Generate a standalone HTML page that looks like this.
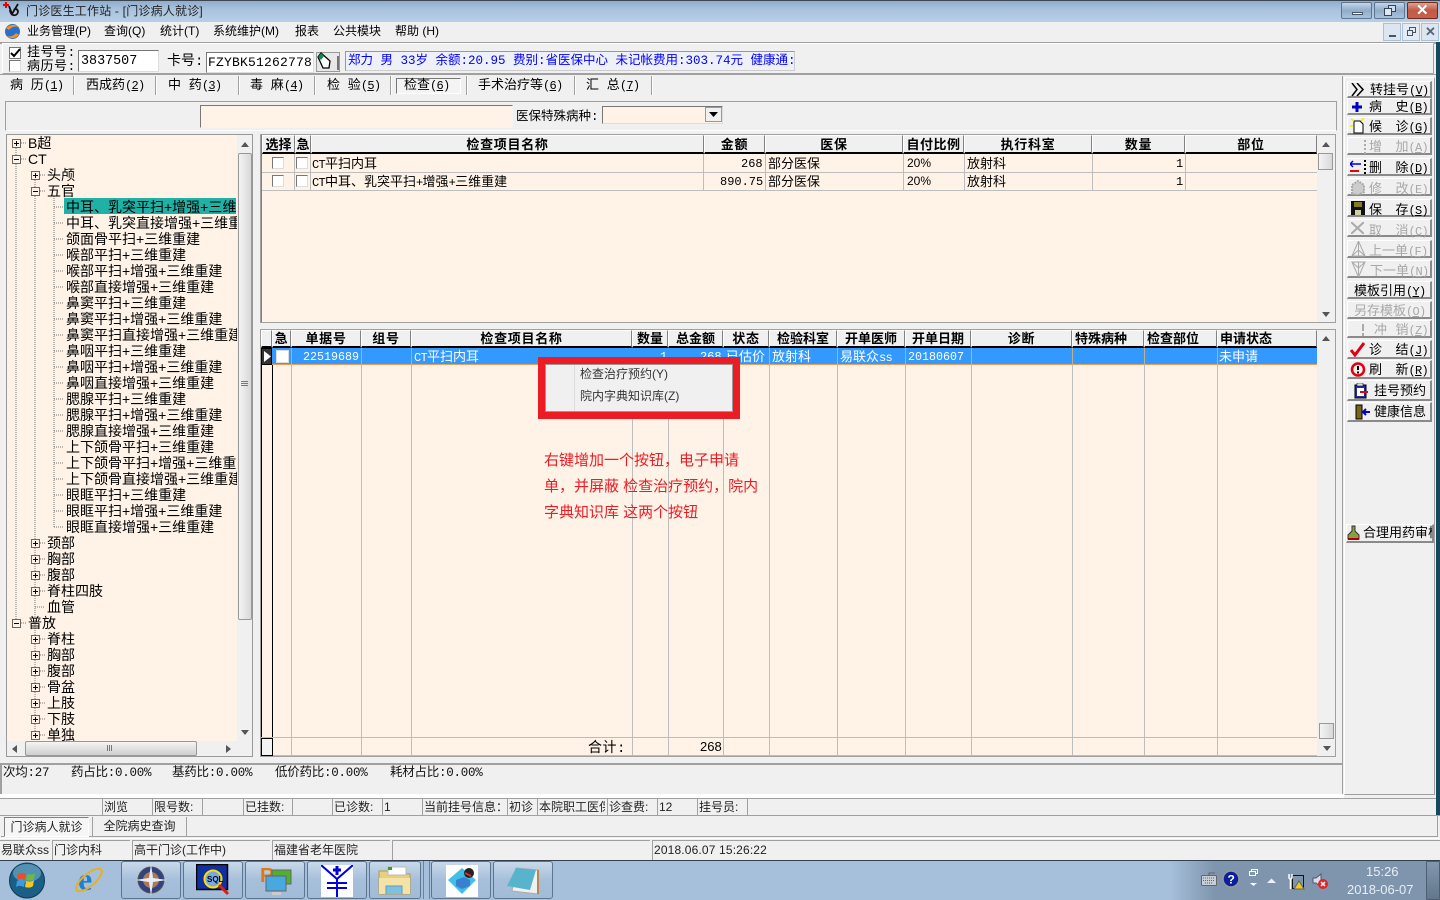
<!DOCTYPE html>
<html lang="zh-CN"><head><meta charset="utf-8"><title>门诊医生工作站</title>
<style>
html,body{margin:0;padding:0;width:1440px;height:900px;overflow:hidden;background:#f0f0f0}
body{position:relative;font-family:"Liberation Sans","Noto Sans CJK SC",sans-serif;font-size:12px;color:#000}
div,span,svg{position:absolute;box-sizing:border-box}
i{font-style:normal;font-size:12px;letter-spacing:-.7px}
.t{white-space:nowrap;line-height:16px;height:16px}
.s{font-family:"Liberation Mono","WenQuanYi Zen Hei","Noto Sans CJK SC",monospace;font-size:13px}
.h{font-weight:bold;font-size:13px;letter-spacing:.7px;text-align:center;font-family:"Liberation Sans","WenQuanYi Zen Hei","Noto Sans CJK SC",sans-serif}
.tr{font-size:14px;font-family:"Liberation Sans","WenQuanYi Zen Hei","Noto Sans CJK SC",sans-serif}
.hc{background:#f0f0f0;border-right:1px solid #808080;border-bottom:2px solid #000;border-left:1px solid #fff;border-top:1px solid #fff}
.g1{padding-top:1px}
.la{text-align:left;padding-left:2px}
.vl{width:1px;background:#bdbdbd}
.hl{height:1px;background:#bdbdbd}
.btn{left:1347px;width:85px;background:#f0f0f0;border-top:1px solid #fff;border-left:1px solid #fff;border-right:2px solid #8a8a8a;border-bottom:2px solid #8a8a8a;font-size:13px;font-family:"Liberation Mono","WenQuanYi Zen Hei","Noto Sans CJK SC",monospace;white-space:nowrap}
.btn span{line-height:15px;top:2px;white-space:nowrap}
.btn span.r{right:2px}
.d{color:#a8a8a8}
.cell{top:798px;height:17px;background:#f0f0f0;border-top:1px solid #a0a0a0;border-left:1px solid #a0a0a0;line-height:16px;padding-left:1px;font-size:12px;white-space:nowrap;overflow:hidden;color:#222}
.c2{top:840px;height:20px;border-top:1px solid #a0a0a0;border-left:1px solid #a0a0a0;line-height:19px;padding-left:1px;font-size:12px;white-space:nowrap;overflow:hidden;color:#222}
.tab{top:78px;height:17px;font-size:13px;line-height:16px;white-space:nowrap}
.tb{top:861px;height:38px;border:1px solid #5d7590;border-radius:3px;background:linear-gradient(#c9d9ea,#a6bfda 50%,#a2bbd6)}
.cb{width:12px;height:12px;background:#fff;border:1px solid #777;border-right-color:#ddd;border-bottom-color:#ddd}
.sep{top:76px;width:2px;height:19px;border-left:1px solid #a0a0a0;border-right:1px solid #fff}
.inf{font-size:12.5px;color:#111;letter-spacing:-.25px;top:765px}
u{text-decoration:underline}
</style></head><body>

<!-- title bar -->
<div style="left:0;top:0;width:1440px;height:22px;background:linear-gradient(#8fadcd,#a9c3de 40%,#b7cee6);border-top:1px solid #3c4650"></div>
<svg style="left:3px;top:1px" width="18" height="18" viewBox="0 0 18 18"><path d="M3 1v6M0 4h6" stroke="#e00" stroke-width="2"/><path d="M6 5l3 8 6-10M7 9c0 6 7 7 8 2 0-3-3-4-4-2" fill="none" stroke="#111" stroke-width="1.8"/></svg>
<div class="t" style="left:26px;top:3px;color:#222;font-size:12px;letter-spacing:.2px">门诊医生工作站 - [门诊病人就诊]</div>
<div style="left:1341px;top:2px;width:31px;height:17px;border:1px solid #5d7590;border-radius:2px;background:linear-gradient(#c4d6e8,#8facc8 50%,#a8c2dc)"><div style="left:10px;top:9px;width:11px;height:3px;background:#fff;border:1px solid #456"></div></div>
<div style="left:1374px;top:2px;width:31px;height:17px;border:1px solid #5d7590;border-radius:2px;background:linear-gradient(#c4d6e8,#8facc8 50%,#a8c2dc)"><div style="left:13px;top:2px;width:8px;height:7px;border:1px solid #345;background:#cde"></div><div style="left:9px;top:5px;width:8px;height:8px;border:1px solid #345;background:#dde8f2"></div></div>
<div style="left:1407px;top:2px;width:31px;height:17px;border:1px solid #6b2a24;border-radius:2px;background:linear-gradient(#e0a090,#c05a45 50%,#c9604a)"><span class="t" style="left:8px;top:0;color:#fff;font-weight:bold;font-size:15px;line-height:15px">✕</span></div>

<!-- menu -->
<svg style="left:4px;top:23px" width="17" height="17" viewBox="0 0 17 17"><circle cx="8.5" cy="8.5" r="7.5" fill="#2a6fd0"/><path d="M2 5c4-4 9-4 13-1-4-1-8 0-10 3z" fill="#f4901e"/><path d="M15 12c-4 4-9 4-13 1 4 1 8 0 10-3z" fill="#f4901e"/></svg>
<span class="t" style="left:27px;top:23px">业务管理(P)</span>
<span class="t" style="left:104px;top:23px">查询(Q)</span>
<span class="t" style="left:160px;top:23px">统计(T)</span>
<span class="t" style="left:213px;top:23px">系统维护(M)</span>
<span class="t" style="left:295px;top:23px">报表</span>
<span class="t" style="left:333px;top:23px">公共模块</span>
<span class="t" style="left:395px;top:23px">帮助 (H)</span>
<div style="left:1383px;top:23px;width:18px;height:18px;border:1px solid #a9c0d8;background:#dce6f0"><div style="left:5px;top:11px;width:7px;height:2px;background:#456"></div></div>
<div style="left:1402px;top:23px;width:18px;height:18px;border:1px solid #a9c0d8;background:#e4ebf3"><div style="left:6px;top:3px;width:7px;height:6px;border:1px solid #456"></div><div style="left:4px;top:6px;width:6px;height:6px;border:1px solid #456;background:#e4ebf3"></div></div>
<div style="left:1421px;top:23px;width:18px;height:18px;border:1px solid #a9c0d8;background:#dce6f0"><span class="t" style="left:3px;top:0;color:#567;font-weight:bold;font-size:13px">✕</span></div>

<!-- right teal strip -->
<div style="left:1436px;top:42px;width:4px;height:773px;background:#17495e"></div>

<!-- toolbar -->
<div style="left:0;top:42px;width:1436px;height:2px;background:#a0a0a0"></div>
<div style="left:2px;top:43px;width:1432px;height:31px;border:1px solid #a0a0a0;border-left-color:#fff;border-top-color:#fff"></div>
<div class="cb" style="left:9px;top:47px;border-color:#777"></div>
<svg style="left:10px;top:48px" width="11" height="11" viewBox="0 0 11 11"><path d="M1 5l3 3 6-7" fill="none" stroke="#000" stroke-width="2"/></svg>
<div class="cb" style="left:9px;top:60px"></div>
<span class="t s" style="left:27px;top:45px;letter-spacing:.5px">挂号号:</span>
<span class="t s" style="left:27px;top:59px;letter-spacing:.5px">病历号:</span>
<div style="left:78px;top:50px;width:81px;height:22px;background:#fff;border:1px solid #777;border-right-color:#ddd;border-bottom-color:#ddd"></div>
<span class="t s" style="left:81px;top:54px;font-size:13.4px">3837507</span>
<span class="t s" style="left:167px;top:54px;font-size:14px">卡号:</span>
<div style="left:206px;top:52px;width:108px;height:21px;background:#fff;border:1px solid #777;border-right-color:#ddd;border-bottom-color:#ddd"></div>
<span class="t s" style="left:208px;top:55px;font-size:13px;letter-spacing:.2px">FZYBK51262778</span>
<svg style="left:316px;top:52px" width="24" height="20" viewBox="0 0 24 20"><rect x=".5" y=".5" width="23" height="19" fill="#e8e8e8" stroke="#999"/><path d="M2 5l3-4 9 8-1 7-6 0z" fill="#fff" stroke="#000" stroke-width="1.3"/><path d="M2 5l3-4 3 3-3 4z" fill="#0a8a55"/><path d="M22 4v14" stroke="#000"/></svg>
<div style="left:345px;top:51px;width:450px;height:20px;background:#eef1f8;border:1px solid #8a9ab0;border-bottom-color:#ccc;border-right-color:#ccc"></div>
<span class="t s" style="left:348px;top:53px;color:#00f;font-size:12.5px">郑力 男 33岁 余额:20.95 费别:省医保中心 未记帐费用:303.74元 健康通:</span>

<!-- tabs -->
<div style="left:0;top:74px;width:1436px;height:1px;background:#a0a0a0"></div>
<span class="t tab s" style="left:10px">病 历<i>(<u>1</u>)</i></span><div class="sep" style="left:73px"></div>
<span class="t tab s" style="left:86px">西成药<i>(<u>2</u>)</i></span><div class="sep" style="left:155px"></div>
<span class="t tab s" style="left:168px">中 药<i>(<u>3</u>)</i></span><div class="sep" style="left:238px"></div>
<span class="t tab s" style="left:250px">毒 麻<i>(<u>4</u>)</i></span><div class="sep" style="left:314px"></div>
<span class="t tab s" style="left:327px">检 验<i>(<u>5</u>)</i></span><div class="sep" style="left:390px"></div>
<div style="left:396px;top:78px;width:65px;height:16px;border:1px solid #777;border-right-color:#fff;border-bottom-color:#fff;background:#f4f4f4"></div>
<span class="t tab s" style="left:404px">检查<i>(<u>6</u>)</i></span>
<div class="sep" style="left:466px"></div>
<span class="t tab s" style="left:478px">手术治疗等<i>(<u>6</u>)</i></span><div class="sep" style="left:574px"></div>
<span class="t tab s" style="left:586px">汇 总<i>(<u>7</u>)</i></span><div class="sep" style="left:651px"></div>

<!-- filter panel -->
<div style="left:5px;top:101px;width:1332px;height:30px;border-top:1px solid #a0a0a0;border-left:1px solid #a0a0a0;border-right:1px solid #a0a0a0;border-bottom:1px solid #fff"></div>
<div style="left:200px;top:105px;width:313px;height:23px;background:#fff3e8;border:1px solid #777;border-right-color:#f4f4f4;border-bottom-color:#f4f4f4"></div>
<span class="t s" style="left:516px;top:109px;font-size:12.5px">医保特殊病种:</span>
<div style="left:602px;top:106px;width:121px;height:18px;background:#fff3e8;border:1px solid #777;border-right-color:#ddd;border-bottom-color:#ddd"></div>
<div style="left:705px;top:107px;width:17px;height:15px;background:#f0f0f0;border:1px solid #999"><svg style="left:3px;top:4px" width="9" height="6"><path d="M0 0h9L4.500 5z" fill="#000"/></svg></div>

<!-- right panel frame -->
<div style="left:1344px;top:77px;width:91px;height:718px;border:1px solid #a0a0a0;border-left-color:#fff;border-top-color:#fff"></div>
<div style="left:1342px;top:76px;width:1px;height:718px;background:#a0a0a0"></div>

<!-- tree -->
<div style="left:6px;top:134px;width:247px;height:623px;background:#fff3e8;border:1px solid #999"></div>
<svg style="left:6px;top:134px" width="232" height="608" viewBox="6 134 232 608">
<g stroke="#777" stroke-dasharray="1 1" fill="none">
<path d="M16 148V623M35 180V735M54 196V527"/>
<path d="M21 143h5M21 159h5M40 175h5M40 191h5M40 543h5M40 559h5M40 575h5M40 591h5M35 607h10M21 623h5M40 639h5M40 655h5M40 671h5M40 687h5M40 703h5M40 719h5M40 735h5"/>
<path d="M54 207h10M54 223h10M54 239h10M54 255h10M54 271h10M54 287h10M54 303h10M54 319h10M54 335h10M54 351h10M54 367h10M54 383h10M54 399h10M54 415h10M54 431h10M54 447h10M54 463h10M54 479h10M54 495h10M54 511h10M54 527h10"/>
</g>
<g fill="#fff3e8" stroke="#666">
<rect x="12.500" y="139.500" width="8" height="8"/><rect x="12.500" y="155.500" width="8" height="8"/><rect x="12.500" y="619.500" width="8" height="8"/>
<rect x="31.500" y="171.500" width="8" height="8"/><rect x="31.500" y="187.500" width="8" height="8"/><rect x="31.500" y="539.500" width="8" height="8"/><rect x="31.500" y="555.500" width="8" height="8"/><rect x="31.500" y="571.500" width="8" height="8"/><rect x="31.500" y="587.500" width="8" height="8"/>
<rect x="31.500" y="635.500" width="8" height="8"/><rect x="31.500" y="651.500" width="8" height="8"/><rect x="31.500" y="667.500" width="8" height="8"/><rect x="31.500" y="683.500" width="8" height="8"/><rect x="31.500" y="699.500" width="8" height="8"/><rect x="31.500" y="715.500" width="8" height="8"/><rect x="31.500" y="731.500" width="8" height="8"/>
</g>
<path stroke="#000" d="M14 143.500h5M14 159.500h5M14 623.500h5M33 175.500h5M33 191.500h5M33 543.500h5M33 559.500h5M33 575.500h5M33 591.500h5M33 639.500h5M33 655.500h5M33 671.500h5M33 687.500h5M33 703.500h5M33 719.500h5M33 735.500h5M16.500 141v5M35.500 173v5M35.500 541v5M35.500 557v5M35.500 573v5M35.500 589v5M35.500 637v5M35.500 653v5M35.500 669v5M35.500 685v5M35.500 701v5M35.500 717v5M35.500 733v5"/>
</svg>
<div style="left:64px;top:198px;width:172px;height:16px;background:#1fb0a6"></div>
<div style="left:7px;top:135px;width:230px;height:606px;overflow:hidden">
<span class="t tr" style="left:21px;top:0">B超</span>
<span class="t tr" style="left:21px;top:16px">CT</span>
<span class="t tr" style="left:40px;top:32px">头颅</span>
<span class="t tr" style="left:40px;top:48px">五官</span>
<span class="t tr" style="left:59px;top:64px">中耳、乳突平扫+增强+三维重建</span>
<span class="t tr" style="left:59px;top:80px">中耳、乳突直接增强+三维重建</span>
<span class="t tr" style="left:59px;top:96px">颌面骨平扫+三维重建</span>
<span class="t tr" style="left:59px;top:112px">喉部平扫+三维重建</span>
<span class="t tr" style="left:59px;top:128px">喉部平扫+增强+三维重建</span>
<span class="t tr" style="left:59px;top:144px">喉部直接增强+三维重建</span>
<span class="t tr" style="left:59px;top:160px">鼻窦平扫+三维重建</span>
<span class="t tr" style="left:59px;top:176px">鼻窦平扫+增强+三维重建</span>
<span class="t tr" style="left:59px;top:192px">鼻窦平扫直接增强+三维重建</span>
<span class="t tr" style="left:59px;top:208px">鼻咽平扫+三维重建</span>
<span class="t tr" style="left:59px;top:224px">鼻咽平扫+增强+三维重建</span>
<span class="t tr" style="left:59px;top:240px">鼻咽直接增强+三维重建</span>
<span class="t tr" style="left:59px;top:256px">腮腺平扫+三维重建</span>
<span class="t tr" style="left:59px;top:272px">腮腺平扫+增强+三维重建</span>
<span class="t tr" style="left:59px;top:288px">腮腺直接增强+三维重建</span>
<span class="t tr" style="left:59px;top:304px">上下颌骨平扫+三维重建</span>
<span class="t tr" style="left:59px;top:320px">上下颌骨平扫+增强+三维重建</span>
<span class="t tr" style="left:59px;top:336px">上下颌骨直接增强+三维重建</span>
<span class="t tr" style="left:59px;top:352px">眼眶平扫+三维重建</span>
<span class="t tr" style="left:59px;top:368px">眼眶平扫+增强+三维重建</span>
<span class="t tr" style="left:59px;top:384px">眼眶直接增强+三维重建</span>
<span class="t tr" style="left:40px;top:400px">颈部</span>
<span class="t tr" style="left:40px;top:416px">胸部</span>
<span class="t tr" style="left:40px;top:432px">腹部</span>
<span class="t tr" style="left:40px;top:448px">脊柱四肢</span>
<span class="t tr" style="left:40px;top:464px">血管</span>
<span class="t tr" style="left:21px;top:480px">普放</span>
<span class="t tr" style="left:40px;top:496px">脊柱</span>
<span class="t tr" style="left:40px;top:512px">胸部</span>
<span class="t tr" style="left:40px;top:528px">腹部</span>
<span class="t tr" style="left:40px;top:544px">骨盆</span>
<span class="t tr" style="left:40px;top:560px">上肢</span>
<span class="t tr" style="left:40px;top:576px">下肢</span>
<span class="t tr" style="left:40px;top:592px">单独</span>
</div>
<!-- tree scrollbars -->
<div style="left:237px;top:135px;width:15px;height:606px;background:#f0f0f0"></div>
<svg style="left:241px;top:142px" width="8" height="5"><path d="M0 5L4 0l4 5z" fill="#555"/></svg>
<div style="left:238px;top:153px;width:14px;height:467px;background:linear-gradient(90deg,#f4f4f4,#d8d8d8);border:1px solid #999;border-radius:2px"></div>
<div style="left:241px;top:381px;width:7px;height:1px;background:#777;box-shadow:0 2px 0 #777,0 4px 0 #777"></div>
<svg style="left:241px;top:730px" width="8" height="5"><path d="M0 0h8L4 5z" fill="#555"/></svg>
<div style="left:7px;top:741px;width:245px;height:15px;background:#f0f0f0"></div>
<svg style="left:12px;top:745px" width="5" height="8"><path d="M5 0v8L0 4z" fill="#555"/></svg>
<div style="left:25px;top:741px;width:172px;height:15px;background:linear-gradient(#f4f4f4,#cfcfcf);border:1px solid #999;border-radius:2px"></div>
<div style="left:107px;top:745px;width:1px;height:6px;background:#777;box-shadow:2px 0 0 #777,4px 0 0 #777"></div>
<svg style="left:226px;top:745px" width="5" height="8"><path d="M0 0v8l5-4z" fill="#555"/></svg>

<!-- Grid 1 -->
<div style="left:260px;top:134px;width:1076px;height:189px;background:#f0f0f0;border:1px solid #a0a0a0"></div>
<div style="left:261px;top:135px;width:1056px;height:187px;background:#fff3e8"></div>
<div style="left:261px;top:135px;width:1px;height:187px;background:#808080"></div>
<div class="hc t h g1" style="left:262px;top:135px;width:33px;height:19px;letter-spacing:0">选择</div>
<div class="hc t h g1" style="left:295px;top:135px;width:16px;height:19px;letter-spacing:0">急</div>
<div class="hc t h g1" style="left:311px;top:135px;width:393px;height:19px">检查项目名称</div>
<div class="hc t h g1" style="left:704px;top:135px;width:61px;height:19px">金额</div>
<div class="hc t h g1" style="left:765px;top:135px;width:138px;height:19px">医保</div>
<div class="hc t h g1" style="left:903px;top:135px;width:61px;height:19px;letter-spacing:.5px">自付比例</div>
<div class="hc t h g1" style="left:964px;top:135px;width:128px;height:19px">执行科室</div>
<div class="hc t h g1" style="left:1092px;top:135px;width:93px;height:19px">数量</div>
<div class="hc t h g1" style="left:1185px;top:135px;width:132px;height:19px">部位</div>
<div class="hl" style="left:262px;top:172px;width:1055px"></div>
<div class="hl" style="left:262px;top:190px;width:1055px"></div>
<div class="vl" style="left:294px;top:154px;height:36px"></div>
<div class="vl" style="left:310px;top:154px;height:36px"></div>
<div class="vl" style="left:703px;top:154px;height:36px"></div>
<div class="vl" style="left:765px;top:154px;height:36px"></div>
<div class="vl" style="left:903px;top:154px;height:36px"></div>
<div class="vl" style="left:964px;top:154px;height:36px"></div>
<div class="vl" style="left:1092px;top:154px;height:36px"></div>
<div class="vl" style="left:1185px;top:154px;height:36px"></div>
<div class="cb" style="left:272px;top:157px"></div><div class="cb" style="left:296px;top:157px"></div>
<div class="cb" style="left:272px;top:175px"></div><div class="cb" style="left:296px;top:175px"></div>
<span class="t s" style="left:312px;top:157px"><i>CT</i>平扫内耳</span>
<span class="t s" style="left:312px;top:175px"><i>CT</i>中耳、乳突平扫<i>+</i>增强<i>+</i>三维重建</span>
<span class="t s" style="left:741px;top:156px;font-size:12px">268</span>
<span class="t s" style="left:720px;top:174px;font-size:12px">890.75</span>
<span class="t s" style="left:768px;top:157px">部分医保</span><span class="t s" style="left:768px;top:175px">部分医保</span>
<span class="t" style="left:907px;top:155px">20%</span><span class="t" style="left:907px;top:173px">20%</span>
<span class="t s" style="left:967px;top:157px">放射科</span><span class="t s" style="left:967px;top:175px">放射科</span>
<span class="t s" style="left:1176px;top:156px;font-size:12px">1</span><span class="t s" style="left:1176px;top:174px;font-size:12px">1</span>
<!-- grid1 scrollbar -->
<svg style="left:1322px;top:142px" width="8" height="5"><path d="M0 5L4 0l4 5z" fill="#555"/></svg>
<div style="left:1318px;top:153px;width:15px;height:17px;background:linear-gradient(90deg,#f4f4f4,#d8d8d8);border:1px solid #999"></div>
<svg style="left:1322px;top:312px" width="8" height="5"><path d="M0 0h8L4 5z" fill="#555"/></svg>

<!-- Grid 2 -->
<div style="left:260px;top:329px;width:1076px;height:428px;background:#f0f0f0;border:1px solid #a0a0a0"></div>
<div style="left:261px;top:330px;width:1056px;height:426px;background:#fff3e8"></div>
<div class="hc" style="left:261px;top:330px;width:11px;height:18px"></div>
<div class="hc t h" style="left:272px;top:330px;width:19px;height:18px">急</div>
<div class="hc t h" style="left:291px;top:330px;width:70px;height:18px">单据号</div>
<div class="hc t h" style="left:361px;top:330px;width:50px;height:18px">组号</div>
<div class="hc t h" style="left:411px;top:330px;width:221px;height:18px">检查项目名称</div>
<div class="hc t h" style="left:632px;top:330px;width:36px;height:18px;letter-spacing:0">数量</div>
<div class="hc t h" style="left:668px;top:330px;width:55px;height:18px;letter-spacing:0">总金额</div>
<div class="hc t h" style="left:723px;top:330px;width:46px;height:18px">状态</div>
<div class="hc t h" style="left:769px;top:330px;width:68px;height:18px;letter-spacing:0">检验科室</div>
<div class="hc t h" style="left:837px;top:330px;width:68px;height:18px;letter-spacing:0">开单医师</div>
<div class="hc t h" style="left:905px;top:330px;width:66px;height:18px;letter-spacing:0">开单日期</div>
<div class="hc t h" style="left:971px;top:330px;width:101px;height:18px">诊断</div>
<div class="hc t h la" style="left:1072px;top:330px;width:72px;height:18px;letter-spacing:0">特殊病种</div>
<div class="hc t h la" style="left:1144px;top:330px;width:73px;height:18px;letter-spacing:0">检查部位</div>
<div class="hc t h la" style="left:1217px;top:330px;width:100px;height:18px;letter-spacing:0">申请状态</div>
<!-- vlines -->
<div class="vl" style="left:291px;top:348px;height:408px"></div>
<div class="vl" style="left:361px;top:348px;height:408px"></div>
<div class="vl" style="left:411px;top:348px;height:408px"></div>
<div class="vl" style="left:632px;top:348px;height:408px"></div>
<div class="vl" style="left:668px;top:348px;height:408px"></div>
<div class="vl" style="left:723px;top:348px;height:408px"></div>
<div class="vl" style="left:769px;top:348px;height:408px"></div>
<div class="vl" style="left:837px;top:348px;height:408px"></div>
<div class="vl" style="left:905px;top:348px;height:408px"></div>
<div class="vl" style="left:971px;top:348px;height:408px"></div>
<div class="vl" style="left:1072px;top:348px;height:408px"></div>
<div class="vl" style="left:1144px;top:348px;height:408px"></div>
<div class="vl" style="left:1217px;top:348px;height:408px"></div>
<div style="left:272px;top:348px;width:1045px;height:17px;background:#3399ff;border-bottom:1px solid #e8a060"></div>
<div class="vl" style="left:291px;top:348px;height:17px;background:#c0b090"></div>
<div class="vl" style="left:361px;top:348px;height:17px;background:#c0b090"></div>
<div class="vl" style="left:411px;top:348px;height:17px;background:#c0b090"></div>
<div class="vl" style="left:769px;top:348px;height:17px;background:#c0b090"></div>
<div class="vl" style="left:837px;top:348px;height:17px;background:#c0b090"></div>
<div class="vl" style="left:905px;top:348px;height:17px;background:#c0b090"></div>
<div class="vl" style="left:971px;top:348px;height:17px;background:#c0b090"></div>
<div class="vl" style="left:1072px;top:348px;height:17px;background:#c0b090"></div>
<div class="vl" style="left:1144px;top:348px;height:17px;background:#c0b090"></div>
<div class="vl" style="left:1217px;top:348px;height:17px;background:#c0b090"></div>
<div style="left:261px;top:348px;width:11px;height:17px;background:#333;border:1px solid #000"><svg style="left:2px;top:2px" width="7" height="11"><path d="M0 0l7 5.500L0 11z" fill="#fff"/></svg></div>
<div style="left:276px;top:350px;width:13px;height:13px;background:#fff;border:1px solid #ddd"></div>
<span class="t s" style="left:303px;top:349px;color:#fff;font-size:11.67px">22519689</span>
<span class="t s" style="left:414px;top:350px;color:#fff"><i>CT</i>平扫内耳</span>
<span class="t s" style="left:660px;top:349px;color:#fff;font-size:12px">1</span>
<span class="t s" style="left:700px;top:349px;color:#fff;font-size:12px">268</span>
<span class="t s" style="left:726px;top:350px;color:#fff">已估价</span>
<span class="t s" style="left:772px;top:350px;color:#fff">放射科</span>
<span class="t s" style="left:840px;top:350px;color:#fff">易联众<i>ss</i></span>
<span class="t s" style="left:908px;top:349px;color:#fff;font-size:11.67px">20180607</span>
<span class="t s" style="left:1219px;top:350px;color:#fff">未申请</span>
<div style="left:261px;top:365px;width:1px;height:373px;background:#000"></div>
<div style="left:272px;top:365px;width:1px;height:391px;background:#000"></div>
<!-- footer -->
<div class="hl" style="left:261px;top:737px;width:1056px"></div>
<div class="hl" style="left:261px;top:755px;width:1056px"></div>
<div style="left:261px;top:738px;width:12px;height:18px;background:#f4f4f4;border:1px solid #000"></div>
<span class="t s" style="left:588px;top:741px;font-size:14px;letter-spacing:.5px">合计:</span>
<span class="t" style="left:700px;top:739px;font-size:13px">268</span>
<!-- grid2 scrollbar -->
<svg style="left:1322px;top:336px" width="8" height="5"><path d="M0 5L4 0l4 5z" fill="#555"/></svg>
<div style="left:1319px;top:723px;width:15px;height:16px;background:linear-gradient(90deg,#f4f4f4,#d8d8d8);border:1px solid #999"></div>
<svg style="left:1323px;top:746px" width="8" height="5"><path d="M0 0h8L4 5z" fill="#555"/></svg>

<!-- context menu -->
<div style="left:538px;top:357px;width:202px;height:62px;border:7px solid #ed1c24"></div>
<div style="left:545px;top:364px;width:188px;height:48px;background:#f0f0f0;border:1px solid #999"></div>
<div style="left:574px;top:365px;width:1px;height:46px;background:#ddd"></div>
<span class="t" style="left:580px;top:366px;color:#333">检查治疗预约(Y)</span>
<span class="t" style="left:580px;top:388px;color:#333">院内字典知识库(Z)</span>

<!-- annotation -->
<span class="t" style="left:544px;top:453px;color:#ed1c24;font-size:15px">右键增加一个按钮，电子申请</span>
<span class="t" style="left:544px;top:479px;color:#ed1c24;font-size:15px">单，并屏蔽 检查治疗预约，院内</span>
<span class="t" style="left:544px;top:505px;color:#ed1c24;font-size:15px">字典知识库 这两个按钮</span>

<!-- right buttons -->
<div class="btn" style="top:81px;height:17px"><svg style="left:3px;top:1px" width="14" height="13"><path d="M1 0l5 6.500L1 13M6 0l6 6.500L6 13" fill="none" stroke="#000" stroke-width="1.500"/></svg><span style="left:22px;top:1px">转挂号<i>(<u>V</u>)</i></span></div>
<div class="btn" style="top:98px;height:17px"><svg style="left:4px;top:3px" width="10" height="10"><path d="M5 0v10M0 5h10" stroke="#00c" stroke-width="3"/></svg><span style="left:21px;top:1px">病</span><span class="r" style="top:1px">史<i>(<u>B</u>)</i></span></div>
<div class="btn" style="top:117px;height:18px"><svg style="left:2px;top:0" width="16" height="16"><path d="M4 3h6l3 3v9H4z" fill="#fff" stroke="#000"/><path d="M1 1l3 2M14 0l-3 3M0 8h3" stroke="#ee0" stroke-width="1.500"/></svg><span style="left:21px">候</span><span class="r">诊<i>(<u>G</u>)</i></span></div>
<div class="btn d" style="top:137px;height:18px"><svg style="left:16px;top:2px" width="3" height="14"><path d="M1 0v14" stroke="#aaa" stroke-width="2" stroke-dasharray="2 2"/></svg><span style="left:21px">增</span><span class="r">加<i>(<u>A</u>)</i></span></div>
<div class="btn" style="top:158px;height:18px"><svg style="left:2px;top:1px" width="18" height="15"><path d="M0 4h11M3 1L0 4l3 3" stroke="#00c" fill="none" stroke-width="1.500"/><path d="M0 11h9" stroke="#e00" stroke-width="2"/><path d="M15 0v15" stroke="#000" stroke-width="2" stroke-dasharray="2 2"/></svg><span style="left:21px">删</span><span class="r">除<i>(<u>D</u>)</i></span></div>
<div class="btn d" style="top:178px;height:18px"><svg style="left:2px;top:1px" width="16" height="15"><path d="M2 14V5l6-4 6 4v7l-6 3z" fill="#ccc" stroke="#aaa" stroke-width="2" stroke-dasharray="2 1"/></svg><span style="left:21px;top:3px">修</span><span class="r" style="top:3px">改<i>(<u>E</u>)</i></span></div>
<div class="btn" style="top:199px;height:18px"><svg style="left:3px;top:1px" width="14" height="14"><path d="M0 0h14v14H0z" fill="#111"/><path d="M3 1h8v5H3z" fill="#7f7f20"/><path d="M4 9h6v5H4z" fill="#d0d0a0"/></svg><span style="left:21px;top:3px">保</span><span class="r" style="top:3px">存<i>(<u>S</u>)</i></span></div>
<div class="btn d" style="top:219px;height:18px"><svg style="left:3px;top:2px" width="13" height="12"><path d="M0 0l13 12M13 0L0 12" stroke="#aaa" stroke-width="2"/></svg><span style="left:21px;top:4px">取</span><span class="r" style="top:4px">消<i>(<u>C</u>)</i></span></div>
<div class="btn d" style="top:240px;height:18px"><svg style="left:3px;top:0" width="15" height="16"><path d="M7.500 0L14 15H1zM7.500 0v15M1 15l6.500-6 6.500 6" fill="none" stroke="#aaa"/></svg><span style="left:21px;top:3px">上一单<i>(<u>F</u>)</i></span></div>
<div class="btn d" style="top:260px;height:18px"><svg style="left:3px;top:0" width="15" height="16"><path d="M7.500 16L14 1H1zM7.500 16V1M1 1l6.500 6 6.500-6" fill="none" stroke="#aaa"/></svg><span style="left:22px;top:3px">下一单<i>(<u>N</u>)</i></span></div>
<div class="btn" style="top:281px;height:18px"><span style="left:6px">模板引用<i>(<u>Y</u>)</i></span></div>
<div class="btn d" style="top:301px;height:18px"><span style="left:6px">另存模板<i>(<u>O</u>)</i></span></div>
<div class="btn d" style="top:320px;height:18px"><svg style="left:14px;top:3px" width="3" height="12"><path d="M1 0v7M1 9v3" stroke="#aaa" stroke-width="2"/></svg><span style="left:26px">冲</span><span class="r">销<i>(<u>Z</u>)</i></span></div>
<div class="btn" style="top:340px;height:19px"><svg style="left:2px;top:1px" width="16" height="15"><path d="M1 8l4 5 9-12" fill="none" stroke="#e00010" stroke-width="3"/></svg><span style="left:21px">诊</span><span class="r">结<i>(<u>J</u>)</i></span></div>
<div class="btn" style="top:360px;height:19px"><svg style="left:2px;top:1px" width="16" height="15"><circle cx="8" cy="7.500" r="6" fill="none" stroke="#e00010" stroke-width="2.500"/><path d="M8 4v4M8 9.500v2" stroke="#000" stroke-width="2"/></svg><span style="left:21px">刷</span><span class="r">新<i>(<u>R</u>)</i></span></div>
<div class="btn" style="top:380px;height:21px"><svg style="left:6px;top:2px" width="15" height="16"><path d="M1 2h11v13H1z" fill="#2030a0" stroke="#000"/><path d="M3 0h6v3H3z" fill="#ddd" stroke="#000" stroke-width=".5"/><path d="M3 5h7v8H3z" fill="#fff"/><path d="M6 9h8" stroke="#e00" stroke-width="2"/></svg><span style="left:26px;top:3px">挂号预约</span></div>
<div class="btn" style="top:402px;height:20px"><svg style="left:7px;top:1px" width="15" height="16"><path d="M1 1h6v14H1z" fill="#77661a" stroke="#000"/><path d="M8 8h7M11 5L8 8l3 3" fill="none" stroke="#00c" stroke-width="2"/></svg><span style="left:26px;top:2px">健康信息</span></div>
<div style="left:1346px;top:524px;width:88px;height:19px;background:#f0f0f0;border-top:1px solid #fff;border-left:1px solid #fff;border-right:2px solid #8a8a8a;border-bottom:2px solid #8a8a8a;overflow:hidden"><svg style="left:0;top:0" width="14" height="16"><path d="M5 1h3v5l4 4v4H1v-4l4-4z" fill="#8aa040" stroke="#333"/><path d="M1 13h11v2H1z" fill="#a00"/></svg><span class="t s" style="left:16px;top:1px;white-space:nowrap">合理用药审核</span></div>

<!-- info -->
<div style="left:0;top:763px;width:1342px;height:2px;background:#a0a0a0"></div>
<div style="left:0;top:763px;width:2px;height:31px;background:#a0a0a0"></div>
<span class="t s inf" style="left:3px">次均:27</span>
<span class="t s inf" style="left:71px">药占比:0.00%</span>
<span class="t s inf" style="left:172px">基药比:0.00%</span>
<span class="t s inf" style="left:275px">低价药比:0.00%</span>
<span class="t s inf" style="left:390px">耗材占比:0.00%</span>

<!-- white band & status -->
<div style="left:0;top:794px;width:1344px;height:4px;background:#fff"></div>
<div style="left:0;top:798px;width:1436px;height:1px;background:#a0a0a0"></div>
<div class="cell" style="left:0;width:100px;border-left:0"></div>
<div class="cell" style="left:102px;width:47px">浏览</div>
<div class="cell" style="left:152px;width:47px">限号数:</div>
<div class="cell" style="left:202px;width:38px"></div>
<div class="cell" style="left:243px;width:47px">已挂数:</div>
<div class="cell" style="left:292px;width:38px"></div>
<div class="cell" style="left:332px;width:47px">已诊数:</div>
<div class="cell" style="left:382px;width:38px">1</div>
<div class="cell" style="left:422px;width:83px">当前挂号信息：</div>
<div class="cell" style="left:507px;width:28px">初诊</div>
<div class="cell" style="left:537px;width:68px">本院职工医保</div>
<div class="cell" style="left:607px;width:48px">诊查费:</div>
<div class="cell" style="left:657px;width:38px">12</div>
<div class="cell" style="left:697px;width:48px">挂号员:</div>
<div class="cell" style="left:747px;width:689px"></div>

<!-- bottom tabs -->
<div style="left:0;top:815px;width:1440px;height:1px;background:#a0a0a0"></div>
<div style="left:1px;top:816px;width:1437px;height:21px;border-bottom:1px solid #a0a0a0;border-right:1px solid #a0a0a0"></div>
<div style="left:0;top:838px;width:1440px;height:1px;background:#fff"></div>
<div style="left:4px;top:817px;width:85px;height:20px;border:1px solid #808080;border-right-color:#fff;border-bottom-color:#fff;background:#f6f6f6;text-align:center;line-height:19px;font-size:12px;white-space:nowrap;color:#222">门诊病人就诊</div>
<div style="left:92px;top:817px;width:95px;height:20px;border-left:1px solid #a0a0a0;border-right:1px solid #a0a0a0;text-align:center;line-height:19px;font-size:12px;white-space:nowrap;color:#222">全院病史查询</div>

<!-- bottom status -->
<div class="c2" style="left:0;width:50px;border-left:0">易联众ss</div>
<div class="c2" style="left:52px;width:78px">门诊内科</div>
<div class="c2" style="left:132px;width:138px">高干门诊(工作中)</div>
<div class="c2" style="left:272px;width:118px">福建省老年医院</div>
<div class="c2" style="left:392px;width:258px"></div>
<div class="c2" style="left:652px;width:788px;letter-spacing:.15px">2018.06.07 15:26:22</div>

<!-- taskbar -->
<div style="left:0;top:860px;width:1440px;height:40px;background:linear-gradient(90deg,#a6bfda 0,#a6bfda 1170px,#7f95ae 1215px,#7f95ae 100%);border-top:1px solid #33404d"></div>
<svg style="left:8px;top:862px" width="38" height="37" viewBox="0 0 38 37"><circle cx="19" cy="18.500" r="17.500" fill="#1b5e86" stroke="#0d3b55"/><ellipse cx="19" cy="11" rx="14" ry="9" fill="#8cc4e0" opacity=".5"/><path d="M10 12c3-2 6-1 8 0l-1 6c-2-1-5-2-8 0z" fill="#e8502a"/><path d="M19 12c3 1 6 1 8-1l-1 6c-2 2-5 2-8 1z" fill="#6dbb3c"/><path d="M9 19c3-2 5-1 8 0l-1 6c-2-1-5-2-8 0z" fill="#3a9ce0"/><path d="M18 19c3 1 6 1 8-1l-1 6c-2 2-5 2-8 1z" fill="#f6c620"/></svg>
<svg style="left:74px;top:863px" width="32" height="34" viewBox="0 0 32 34"><text x="4" y="27" font-family="Liberation Serif" font-size="32" font-weight="bold" fill="#1f7fd0">e</text><ellipse cx="15" cy="17" rx="16" ry="6" transform="rotate(-40 15 17)" fill="none" stroke="#e8b020" stroke-width="2"/></svg>
<div class="tb" style="left:121px;width:60px"><svg style="left:13px;top:2px" width="32" height="32" viewBox="0 0 32 32"><circle cx="16" cy="16" r="13" fill="#33427e" stroke="#555"/><circle cx="16" cy="16" r="8" fill="#a87a5a"/><path d="M16 0l2 14 14 2-14 2-2 14-2-14L0 16l14-2z" fill="#e8ecf2"/></svg></div>
<div class="tb" style="left:183px;width:60px"><svg style="left:12px;top:2px" width="36" height="33" viewBox="0 0 36 33"><rect x=".5" y=".5" width="31" height="25" fill="#1030a0" stroke="#000" stroke-width="1.500"/><circle cx="17" cy="15" r="8.500" fill="#7ad" stroke="#fd0" stroke-width="2"/><text x="11" y="18" font-size="8" font-weight="bold" font-family="Liberation Sans" fill="#002">SQL</text><path d="M23 21l9 9" stroke="#d02020" stroke-width="3"/></svg></div>
<div class="tb" style="left:245px;width:60px"><svg style="left:12px;top:2px" width="36" height="33" viewBox="0 0 36 33"><text x="2" y="18" font-size="20" font-weight="bold" font-family="Liberation Sans" fill="#e07818">R</text><rect x="14" y="6" width="19" height="14" fill="#50b030" stroke="#666"/><rect x="8" y="12" width="20" height="15" fill="#4aa8e0" stroke="#666"/><path d="M14 28h9v3h-9z" fill="#ccc"/></svg></div>
<div class="tb" style="left:307px;width:60px"><div style="left:13px;top:3px;width:32px;height:32px;background:#fff"></div><svg style="left:13px;top:3px" width="32" height="32" viewBox="0 0 32 32"><path d="M0 0l16 14L32 0M16 14v18M6 18h20M6 23h20" fill="none" stroke="#0000e0" stroke-width="2"/><path d="M16 1v9M12 5h8" stroke="#0000e0" stroke-width="3"/></svg></div>
<div class="tb" style="left:369px;width:52px"><svg style="left:8px;top:4px" width="34" height="30" viewBox="0 0 34 30"><path d="M1 5h12l3 3h16v20H1z" fill="#e8cf80" stroke="#b09a50"/><path d="M10 1h18v8H10z" fill="#fff" stroke="#bbb"/><path d="M10 1h4v3h-4z" fill="#30a030"/><path d="M1 12h31v16H1z" fill="#f3e3a6"/><path d="M8 28v-8h16v8" fill="#7fc0e0" stroke="#5a9fc0"/></svg></div>
<div style="left:423px;top:861px;width:7px;height:38px;border-left:1px solid #6b829c;border-right:1px solid #6b829c"></div>
<div class="tb" style="left:431px;width:60px"><div style="left:14px;top:3px;width:32px;height:32px;background:#fff"></div><svg style="left:14px;top:3px" width="32" height="32" viewBox="0 0 32 32"><path d="M16 3l14 12-14 14L2 15z" fill="#40c0e8"/><path d="M10 15l8-3 6 3v6l-8 3-6-3z" fill="#3a7fd0"/><circle cx="23" cy="8" r="5" fill="#222"/><path d="M19 8l6 3" stroke="#d03030" stroke-width="2"/></svg></div>
<div class="tb" style="left:493px;width:60px"><svg style="left:12px;top:4px" width="36" height="30" viewBox="0 0 36 30"><path d="M10 2l22 2 0 24-26-3z" fill="#f0f0f0" stroke="#aaa"/><path d="M10 2L30 4 24 24 1 20z" fill="#58b4cc"/><path d="M32 4v24" stroke="#b08a50" stroke-width="2"/></svg></div>

<!-- tray -->
<svg style="left:1201px;top:871px" width="17" height="16" viewBox="0 0 17 16"><rect x=".5" y="4.500" width="15" height="10" rx="1" fill="#c8ced6" stroke="#666"/><path d="M2 7h12M2 9.500h12M4 12h8" stroke="#667" stroke-dasharray="1 1"/><path d="M8 4V2h6" fill="none" stroke="#666"/></svg>
<svg style="left:1222px;top:870px" width="18" height="18" viewBox="0 0 18 18"><circle cx="9" cy="9" r="8" fill="#0a1fa0" stroke="#999" stroke-width="1.500"/><text x="5.500" y="13.500" font-size="12" font-weight="bold" font-family="Liberation Sans" fill="#fff">?</text></svg>
<svg style="left:1248px;top:869px" width="12" height="20" viewBox="0 0 12 20"><rect x="3.500" y=".5" width="6" height="4" fill="none" stroke="#fff"/><rect x="1.500" y="2.500" width="6" height="4" fill="#7f95ae" stroke="#fff"/><path d="M2 14h7l-3.500 3z" fill="#fff"/></svg>
<svg style="left:1267px;top:878px" width="9" height="6"><path d="M0 5l4.500-4.500L9 5z" fill="#eef"/></svg>
<svg style="left:1288px;top:873px" width="17" height="17" viewBox="0 0 17 17"><rect x="4.500" y="2.500" width="11" height="13" fill="none" stroke="#111"/><path d="M1 1v4l1.500 1.500V16M4 1v4L2.500 6.500" fill="none" stroke="#fff" stroke-width="1.500"/><path d="M11 8l5 8H6z" fill="#f0c820" stroke="#665"/></svg>
<svg style="left:1312px;top:873px" width="16" height="17" viewBox="0 0 16 17"><path d="M1 5h3l5-4v13L4 10H1z" fill="#dde" stroke="#556"/><circle cx="11" cy="11" r="5" fill="#e02525"/><path d="M9 9l4 4M13 9l-4 4" stroke="#fff" stroke-width="1.500"/></svg>
<span class="t" style="left:1366px;top:864px;color:#e8eef5;font-size:13px">15:26</span>
<span class="t" style="left:1347px;top:882px;color:#e8eef5;font-size:13px">2018-06-07</span>
<div style="left:1426px;top:861px;width:14px;height:39px;border:1px solid #4d5f72;border-radius:1px;background:linear-gradient(#8298ae,#62778c)"></div>
</body></html>
